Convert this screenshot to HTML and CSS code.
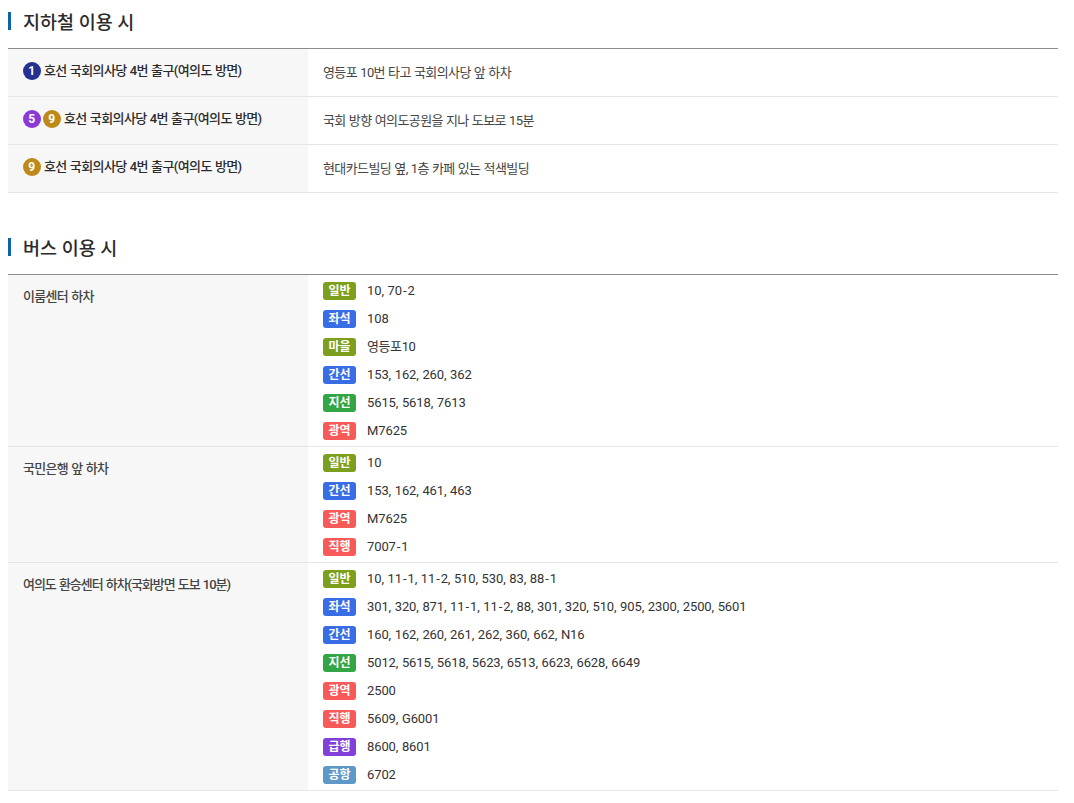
FILE: index.html
```html
<!DOCTYPE html>
<html lang="ko">
<head>
<meta charset="utf-8">
<title>교통 안내</title>
<link rel="stylesheet" href="styles.css">
</head>
<body>
<section class="section">
  <h2 class="heading">지하철 이용 시</h2>
  <div class="table">
    <div class="row subway">
      <div class="label strong"><span class="line c1">1</span><span class="exit">호선 국회의사당 4번 출구(여의도 방면)</span></div>
      <div class="value">영등포 10번 타고 국회의사당 앞 하차</div>
    </div>
    <div class="row subway">
      <div class="label strong"><span class="line c5">5</span><span class="line c9">9</span><span class="exit">호선 국회의사당 4번 출구(여의도 방면)</span></div>
      <div class="value">국회 방향 여의도공원을 지나 도보로 15분</div>
    </div>
    <div class="row subway">
      <div class="label strong"><span class="line c9">9</span><span class="exit">호선 국회의사당 4번 출구(여의도 방면)</span></div>
      <div class="value">현대카드빌딩 옆, 1층 카페 있는 적색빌딩</div>
    </div>
  </div>
</section>
<section class="section bus">
  <h2 class="heading">버스 이용 시</h2>
  <div class="table">
    <div class="row">
      <div class="label stop">이룸센터 하차</div>
      <div class="value routes">
        <div class="route"><span class="badge green">일반</span><span class="num">10, 70<span class="dash">-</span>2</span></div>
        <div class="route"><span class="badge blue">좌석</span><span class="num">108</span></div>
        <div class="route"><span class="badge green">마을</span><span class="num hangul">영등포10</span></div>
        <div class="route"><span class="badge blue">간선</span><span class="num">153, 162, 260, 362</span></div>
        <div class="route"><span class="badge lime">지선</span><span class="num">5615, 5618, 7613</span></div>
        <div class="route"><span class="badge red">광역</span><span class="num">M7625</span></div>
      </div>
    </div>
    <div class="row">
      <div class="label stop">국민은행 앞 하차</div>
      <div class="value routes">
        <div class="route"><span class="badge green">일반</span><span class="num">10</span></div>
        <div class="route"><span class="badge blue">간선</span><span class="num">153, 162, 461, 463</span></div>
        <div class="route"><span class="badge red">광역</span><span class="num">M7625</span></div>
        <div class="route"><span class="badge red">직행</span><span class="num">7007<span class="dash">-</span>1</span></div>
      </div>
    </div>
    <div class="row">
      <div class="label stop long">여의도 환승센터 하차(국화방면 도보 10분)</div>
      <div class="value routes">
        <div class="route"><span class="badge green">일반</span><span class="num">10, 11<span class="dash">-</span>1, 11<span class="dash">-</span>2, 510, 530, 83, 88<span class="dash">-</span>1</span></div>
        <div class="route"><span class="badge blue">좌석</span><span class="num">301, 320, 871, 11<span class="dash">-</span>1, 11<span class="dash">-</span>2, 88, 301, 320, 510, 905, 2300, 2500, 5601</span></div>
        <div class="route"><span class="badge blue">간선</span><span class="num">160, 162, 260, 261, 262, 360, 662, N16</span></div>
        <div class="route"><span class="badge lime">지선</span><span class="num">5012, 5615, 5618, 5623, 6513, 6623, 6628, 6649</span></div>
        <div class="route"><span class="badge red">광역</span><span class="num">2500</span></div>
        <div class="route"><span class="badge red">직행</span><span class="num">5609, G6001</span></div>
        <div class="route"><span class="badge purple">급행</span><span class="num">8600, 8601</span></div>
        <div class="route"><span class="badge sky">공항</span><span class="num">6702</span></div>
      </div>
    </div>
  </div>
</section>
</body>
</html>
```
FILE: styles.css
```css
* { box-sizing: border-box; }
html, body { margin: 0; padding: 0; background: #fff; }
body {
  padding: 0 16px 0 8px;
  font-family: Roboto, "Noto Sans CJK KR", sans-serif;
  font-size: 13px;
  color: #333;
  letter-spacing: -0.6px;
  word-spacing: 0.5px;
}
.section { padding-top: 12px; }
.bus { padding-top: 45px; }
.heading {
  margin: 0 0 18px;
  height: 18px;
  padding-left: 12px;
  border-left: 3px solid #0f62a3;
  font-size: 18.5px;
  line-height: 22px;
  font-weight: 500;
  color: #2b2b2b;
  letter-spacing: 0;
  word-spacing: 0;
}
.table { border-top: 1px solid #8c8c8c; }
.row {
  display: flex;
  border-bottom: 1px solid #e6e6e6;
}
.subway { height: 48px; }
.subway .value { padding-top: 15px; color: #444; }
.label {
  flex: 0 0 300px;
  padding: 13px 15px;
  background: #f7f7f7;
  line-height: 18px;
}
.strong {
  display: flex;
  align-items: flex-start;
  gap: 2.5px;
  font-weight: 500;
  color: #2b2b2b;
}
.exit { margin-left: 1px; }
.stop { font-weight: 500; color: #444; letter-spacing: -0.7px; word-spacing: 0.7px; }
.long { letter-spacing: -1.05px; word-spacing: 1px; }
.value {
  flex: 1;
  padding-left: 15px;
  line-height: 18px;
}
.routes {
  padding-top: 7px;
  padding-bottom: 6px;
  color: #333;
}
.route {
  display: flex;
  align-items: center;
  gap: 11px;
  height: 18px;
  margin-bottom: 10px;
}
.route:last-child { margin-bottom: 0; }
.num { letter-spacing: -0.1px; word-spacing: 0.5px; margin-top: -1px; }
.dash { margin: 0 1px; }
.hangul { letter-spacing: -0.4px; }
.line {
  flex: none;
  width: 17.5px;
  height: 18px;
  border-radius: 50%;
  color: #fff;
  font-size: 12px;
  font-weight: 700;
  text-align: center;
  line-height: 18px;
  letter-spacing: 0;
}
.c1 { background: #24318f; }
.c5 { background: #8a3bd6; }
.c9 { background: #bd8a1a; }
.badge {
  flex: none;
  width: 33px;
  height: 18px;
  border-radius: 3px;
  color: #fff;
  font-size: 12px;
  font-weight: 700;
  line-height: 18px;
  text-align: center;
  letter-spacing: 0;
}
.green { background: #7c9f1d; }
.blue { background: #386de6; }
.lime { background: #32a544; }
.red { background: #f75a57; }
.purple { background: #8240d8; }
.sky { background: #6097c9; }
```
